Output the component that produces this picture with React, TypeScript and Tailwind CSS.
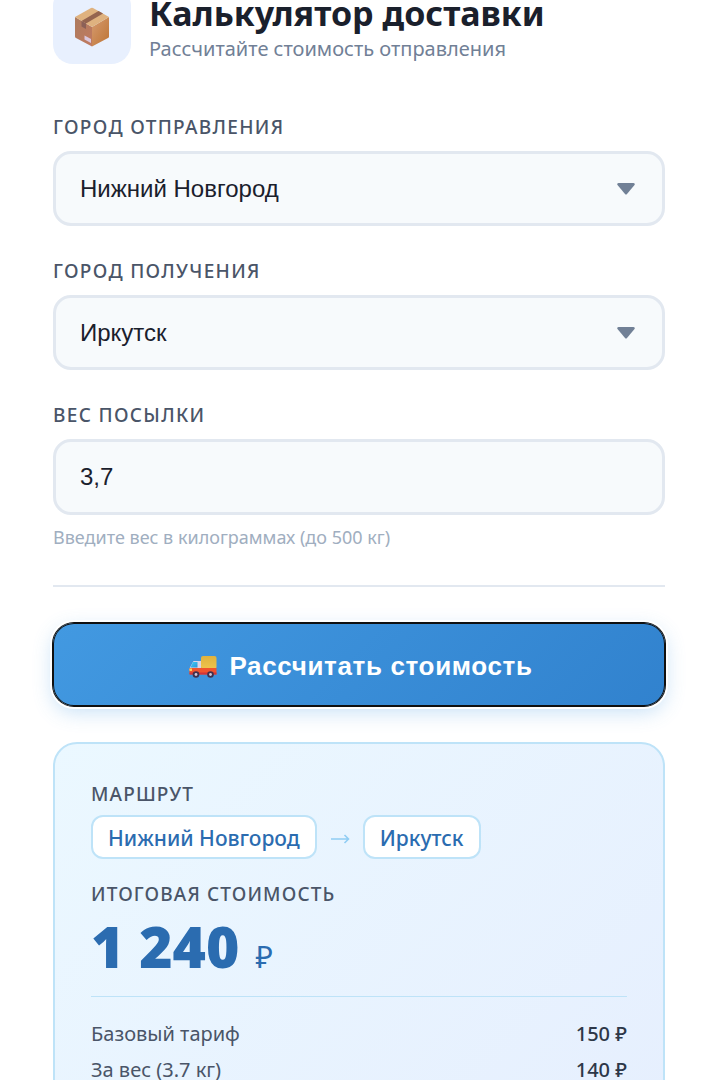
import { useState } from 'react';
import type { ReactNode } from 'react';

const CITIES = ['Москва', 'Нижний Новгород', 'Казань', 'Екатеринбург', 'Иркутск'];

const BREAKDOWN = [
  { label: 'Базовый тариф', value: '150 ₽' },
  { label: 'За вес (3.7 кг)', value: '140 ₽' },
];

function BoxIcon() {
  return (
    <svg viewBox="0 0 36 40" className="h-10 w-9" aria-hidden="true">
      <defs>
        <linearGradient id="boxLeft" x1="0" y1="0" x2="1" y2="1">
          <stop offset="0" stopColor="#ad7b5e" />
          <stop offset="1" stopColor="#c17a60" />
        </linearGradient>
        <linearGradient id="boxRight" x1="0" y1="0" x2="1" y2="1">
          <stop offset="0" stopColor="#d69b70" />
          <stop offset="1" stopColor="#bd7434" />
        </linearGradient>
      </defs>
      <path d="M1 10 18 20V39.5L2 31Q1 30.5 1 29.5Z" fill="url(#boxLeft)" />
      <path d="M18 20 35 10V29.5Q35 30.5 34 31L18 39.5Z" fill="url(#boxRight)" />
      <path d="M1 10 17 1Q18 .5 19 1L35 10 18 20Z" fill="#dfb27f" />
      <path d="M7.5 14 24.5 4 29 6.5 12 16.5Z" fill="#94644f" />
      <path d="M7.5 14 12 16.5V22L7.5 19.5Z" fill="#8b6057" />
      <path d="M10.5 28.5 17 32V36L10.5 32.5Z" fill="#dac6dc" />
    </svg>
  );
}

function TruckIcon() {
  return (
    <svg viewBox="0 0 28 24" className="h-6 w-7" aria-hidden="true">
      <defs>
        <linearGradient id="cargo" x1="0" y1="0" x2="0" y2="1">
          <stop offset="0" stopColor="#dfb23e" />
          <stop offset="1" stopColor="#efc44c" />
        </linearGradient>
        <linearGradient id="glass" x1="0" y1="0" x2="1" y2="1">
          <stop offset="0" stopColor="#3fd0f5" />
          <stop offset="1" stopColor="#2b93d8" />
        </linearGradient>
      </defs>
      <path d="M4.5 6H12V15H.5L1 12.5Z" fill="#dcd3e4" />
      <path d="M4 7H8.5V12.5H1.5Z" fill="url(#glass)" />
      <rect x="12" y="1" width="15.5" height="13" rx="2" fill="url(#cargo)" />
      <path d="M.5 13H27.5V19.5H1.5Q.5 19.5 .5 18.5Z" fill="#f0532d" />
      <path d="M.5 17.5H27.5V19.5H.5Z" fill="#d13438" />
      <path d="M.5 13.5H3V16H.5Z" fill="#f9d15a" />
      <circle cx="7" cy="19.5" r="3.3" fill="#40304d" />
      <circle cx="7" cy="19.5" r="1.4" fill="#cfc5d6" />
      <circle cx="21.5" cy="19.5" r="3.3" fill="#40304d" />
      <circle cx="21.5" cy="19.5" r="1.4" fill="#cfc5d6" />
    </svg>
  );
}

function FieldLabel({ htmlFor, children }: { htmlFor: string; children: ReactNode }) {
  return (
    <label htmlFor={htmlFor} className="mb-2.5 block text-[19px] leading-7 font-medium tracking-[0.07em] text-[#4a5568] uppercase">
      {children}
    </label>
  );
}

type CitySelectProps = {
  id: string;
  label: string;
  value: string;
  onChange: (value: string) => void;
};

function CitySelect({ id, label, value, onChange }: CitySelectProps) {
  return (
    <div>
      <FieldLabel htmlFor={id}>{label}</FieldLabel>
      <div className="relative">
        <select
          id={id}
          value={value}
          onChange={(e) => onChange(e.target.value)}
          className="block h-[75px] w-full appearance-none rounded-[18px] border-3 border-[#e2e8f0] bg-[#f7fafc] px-6 font-['Liberation_Sans',Arial,sans-serif] text-2xl text-[#1a202c] outline-none"
        >
          {CITIES.map((city) => (
            <option key={city} value={city}>{city}</option>
          ))}
        </select>
        <svg viewBox="0 0 18 12" className="pointer-events-none absolute top-1/2 right-[30px] h-3 w-[18px] -translate-y-1/2" aria-hidden="true">
          <path d="M1.5 0H16.5Q18.5 .5 17.5 2L10 11Q9 12 8 11L.5 2Q-.5 .5 1.5 0Z" fill="#718096" />
        </svg>
      </div>
    </div>
  );
}

function CityChip({ children }: { children: ReactNode }) {
  return (
    <span className="rounded-xl border-2 border-[#bee3f8] bg-white px-[15px] pt-[7px] pb-[5px] text-[21px] leading-7 font-medium text-[#2b6cb0]">
      {children}
    </span>
  );
}

function ResultTitle({ children }: { children: ReactNode }) {
  return (
    <h2 className="text-[19px] leading-7 font-medium tracking-[0.06em] text-[#4a5568] uppercase">
      {children}
    </h2>
  );
}

export default function App() {
  const [from, setFrom] = useState('Нижний Новгород');
  const [to, setTo] = useState('Иркутск');
  const [weight, setWeight] = useState('3,7');

  return (
    <main className="h-screen overflow-hidden bg-white pr-[52px] pl-[53px] font-['Noto_Sans','Open_Sans',sans-serif]">
      <header className="-mt-3.5 flex items-center gap-[18px]">
        <div className="flex size-[78px] shrink-0 items-center justify-center rounded-[20px] bg-[#e8f0fe] pt-1">
          <BoxIcon />
        </div>
        <div className="pt-1.5">
          <h1 className="text-[34px] leading-10 font-bold text-[#1a202c]">Калькулятор доставки</h1>
          <p className="pt-0.5 text-xl leading-7 text-[#718096]">Рассчитайте стоимость отправления</p>
        </div>
      </header>

      <form className="mt-[49px]" onSubmit={(e) => e.preventDefault()}>
        <div className="space-y-[31px]">
          <CitySelect id="from" label="Город отправления" value={from} onChange={setFrom} />
          <CitySelect id="to" label="Город получения" value={to} onChange={setTo} />
          <div>
            <FieldLabel htmlFor="weight">Вес посылки</FieldLabel>
            <input
              id="weight"
              type="text"
              inputMode="decimal"
              value={weight}
              onChange={(e) => setWeight(e.target.value)}
              className="block h-[76px] w-full rounded-[18px] border-3 border-[#e2e8f0] bg-[#f7fafc] px-6 font-['Liberation_Sans',Arial,sans-serif] text-2xl text-[#1a202c] outline-none"
            />
            <p className="mt-2.5 text-lg leading-6 text-[#a0aec0]">Введите вес в килограммах (до 500 кг)</p>
          </div>
        </div>

        <hr className="mt-9 border-t-2 border-[#e2e8f0]" />

        <button
          type="submit"
          className="mt-9 flex h-[83px] w-full items-center justify-center gap-3 rounded-[21px] bg-linear-135 from-[#4299e1] to-[#3182ce] pt-1 pl-1 font-['Liberation_Sans',Arial,sans-serif] text-[26px] font-bold tracking-wide text-white shadow-[inset_0_0_0_1px_#101010,0_0_0_1px_#101010,0_0_0_3px_#fff,0_6px_20px_rgba(66,153,225,0.3)]"
        >
          <TruckIcon />
          Рассчитать стоимость
        </button>
      </form>

      <section className="mt-9 rounded-3xl border-2 border-[#bee3f8] bg-linear-135 from-[#ebf8ff] to-[#e6effe] p-9">
        <ResultTitle>Маршрут</ResultTitle>
        <div className="mt-[7px] flex items-center gap-[13px]">
          <CityChip>{from}</CityChip>
          <svg viewBox="0 0 20 12" className="mt-1 h-3 w-5" fill="none" stroke="#90cdf4" strokeWidth="1.6" aria-hidden="true">
            <path d="M1 6H18.5M14.5 2 18.5 6 14.5 10" />
          </svg>
          <CityChip>{to}</CityChip>
        </div>

        <div className="mt-[21px]">
          <ResultTitle>Итоговая стоимость</ResultTitle>
        </div>
        <p className="mt-2 flex items-baseline gap-4 text-[#2b6cb0]">
          <span className="text-[57px] leading-[60px] font-black">1 240</span>
          <span className="text-[30px] leading-10">₽</span>
        </p>

        <dl className="mt-[19px] border-t border-[#bee3f8] pt-[19px]">
          {BREAKDOWN.map((row) => (
            <div key={row.label} className="flex justify-between py-1 text-xl leading-7">
              <dt className="text-[#4a5568]">{row.label}</dt>
              <dd className="font-medium text-[#2d3748]">{row.value}</dd>
            </div>
          ))}
        </dl>
      </section>
    </main>
  );
}
